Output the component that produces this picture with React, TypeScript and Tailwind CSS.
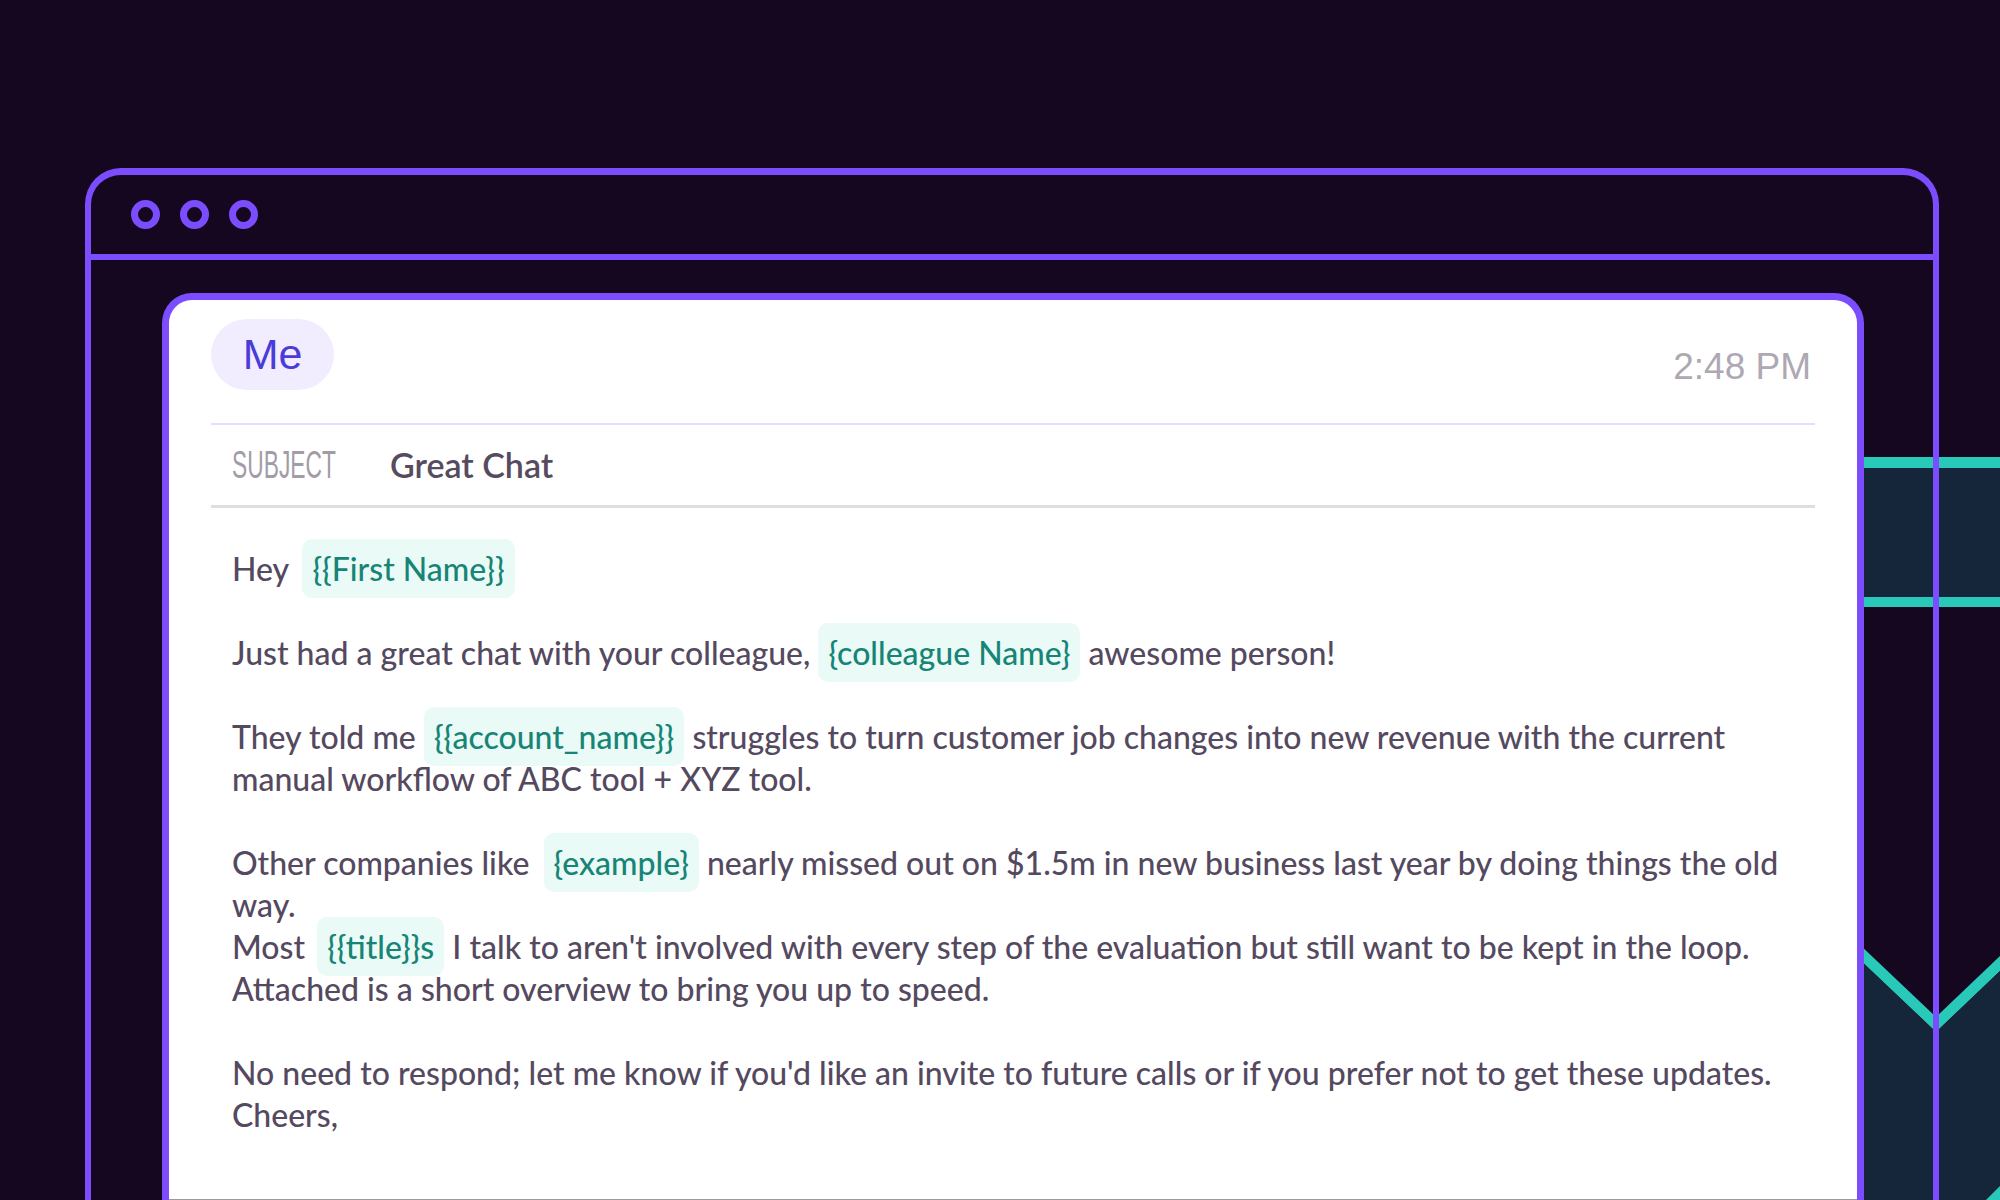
export default function App() {
  const pill = "rounded-[10px] bg-[#eafaf7] px-[10px] py-[10px] text-[#178576]";

  return (
    <div className="relative h-[1200px] w-[2000px] overflow-hidden bg-[#14071f] pl-[85px] pt-[168px]">
      {/* background stripes on the right */}
      <svg className="absolute left-0 top-0" width="2000" height="1200" viewBox="0 0 2000 1200">
        <rect x="1800" y="457" width="200" height="11" fill="#29c9b9" />
        <rect x="1800" y="468" width="200" height="129" fill="#16263a" />
        <rect x="1800" y="597" width="200" height="10" fill="#29c9b9" />
        <polygon points="1800,888 1936,1017 2000,956 2000,971 1936,1032 1800,903" fill="#29c9b9" />
        <polygon points="1800,903 1936,1032 2000,971 2000,1200 1800,1200" fill="#16263a" />
        <polygon points="1986,1200 2000,1186 2000,1200" fill="#29c9b9" />
      </svg>

      <div className="relative h-[1100px] w-[1854px] rounded-t-[36px] border-[6px] border-t-[7px] border-b-0 border-[#7c4dff]">
        <div className="flex h-[85px] items-center gap-[20px] border-b-[6px] border-[#7c4dff] pl-[40px]">
          <div className="size-[29px] rounded-full border-[7px] border-[#7c4dff]" />
          <div className="size-[29px] rounded-full border-[7px] border-[#7c4dff]" />
          <div className="size-[29px] rounded-full border-[7px] border-[#7c4dff]" />
        </div>

        <div className="pl-[71px] pr-[69px] pt-[33px]">
          <div className="h-[907px] rounded-t-[30px] border-[7px] border-b-0 border-[#7c4dff] bg-white">
            <div className="h-[900px] border-b border-[#9a9a9a] px-[42px] pt-[19px]">
              <div className="flex items-start justify-between">
                <div className="flex h-[71px] w-[123px] items-center justify-center rounded-full bg-[#f1edff]">
                  <span className="font-['Liberation_Sans',Arial,sans-serif] text-[43px] leading-none text-[#4b3bd8]">Me</span>
                </div>
                <span className="mr-[4px] mt-[29px] font-['Liberation_Sans',Arial,sans-serif] text-[37px] leading-none text-[#aea8b3]">
                  2:48 PM
                </span>
              </div>

              <div className="mt-[33px] h-[2px] bg-[#e2deff]" />

              <div className="flex h-[80px] items-center pl-[21px]">
                <div className="w-[158px]">
                  <span className="inline-block origin-left scale-x-[0.6] font-['Liberation_Sans',Arial,sans-serif] text-[38px] leading-none text-[#a29ca9]">
                    SUBJECT
                  </span>
                </div>
                <span className="font-['Lato',sans-serif] text-[34px] font-semibold leading-none text-[#564b5f]">Great Chat</span>
              </div>

              <div className="h-[3px] bg-[#dedede]" />

              <div className="whitespace-nowrap pl-[21px] pt-[40px] font-['Lato',sans-serif] text-[32px] font-medium leading-[42px] text-[#54495f]">
                <div>
                  Hey <span className={`ml-[6px] ${pill}`}>{"{{First Name}}"}</span>
                </div>
                <div className="h-[42px]" />
                <div>
                  Just had a great chat with your colleague, <span className={pill}>{"{colleague Name}"}</span> awesome person!
                </div>
                <div className="h-[42px]" />
                <div>
                  They told me <span className={pill}>{"{{account_name}}"}</span> struggles to turn customer job changes into new revenue with the current
                </div>
                <div>manual workflow of ABC tool + XYZ tool.</div>
                <div className="h-[42px]" />
                <div>
                  Other companies like <span className={`ml-[6px] ${pill}`}>{"{example}"}</span> nearly missed out on $1.5m in new business last year by doing things the old
                </div>
                <div>way.</div>
                <div>
                  Most <span className={`ml-[4px] ${pill}`}>{"{{title}}s"}</span> I talk to aren't involved with every step of the evaluation but still want to be kept in the loop.
                </div>
                <div>Attached is a short overview to bring you up to speed.</div>
                <div className="h-[42px]" />
                <div>No need to respond; let me know if you'd like an invite to future calls or if you prefer not to get these updates.</div>
                <div>Cheers,</div>
              </div>
            </div>
          </div>
        </div>
      </div>
    </div>
  );
}
